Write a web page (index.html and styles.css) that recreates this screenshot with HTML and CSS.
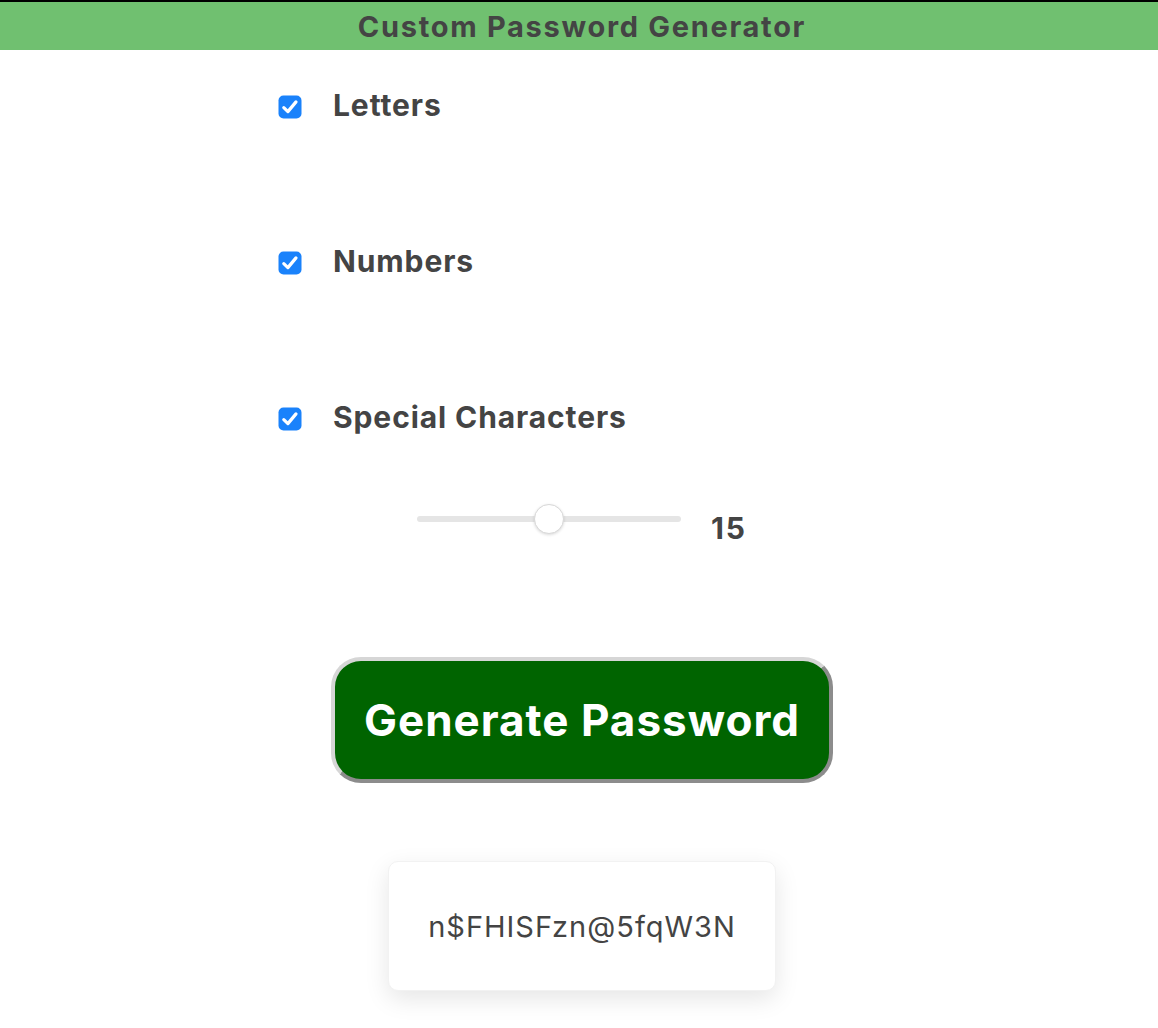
FILE: index.html
```html
<!DOCTYPE html>
<html>
<head>
<meta charset="utf-8">
<link rel="stylesheet" href="styles.css">
</head>
<body>
<header class="topbar"><h1 class="title">Custom Password Generator</h1></header>
<main class="app">
  <div class="options">
    <label class="option">
      <span class="check"><svg viewBox="0 0 24 24" width="24" height="24"><rect x="0.5" y="0.5" width="23" height="23" rx="5" fill="#1a82fb"/><path d="M5.8 12.6 L9.9 16.6 L18 6.9" fill="none" stroke="#fff" stroke-width="3.2" stroke-linecap="round" stroke-linejoin="round"/></svg></span>
      <span class="label">Letters</span>
    </label>
    <label class="option">
      <span class="check"><svg viewBox="0 0 24 24" width="24" height="24"><rect x="0.5" y="0.5" width="23" height="23" rx="5" fill="#1a82fb"/><path d="M5.8 12.6 L9.9 16.6 L18 6.9" fill="none" stroke="#fff" stroke-width="3.2" stroke-linecap="round" stroke-linejoin="round"/></svg></span>
      <span class="label">Numbers</span>
    </label>
    <label class="option">
      <span class="check"><svg viewBox="0 0 24 24" width="24" height="24"><rect x="0.5" y="0.5" width="23" height="23" rx="5" fill="#1a82fb"/><path d="M5.8 12.6 L9.9 16.6 L18 6.9" fill="none" stroke="#fff" stroke-width="3.2" stroke-linecap="round" stroke-linejoin="round"/></svg></span>
      <span class="label">Special Characters</span>
    </label>
  </div>
  <div class="length">
    <div class="slider">
      <div class="track"></div>
      <div class="thumb" style="left: 50%"></div>
    </div>
    <span class="value">15</span>
  </div>
  <button class="generate">Generate Password</button>
  <div class="result">n$FHISFzn@5fqW3N</div>
</main>
</body>
</html>
```
FILE: styles.css
```css
html, body {
  margin: 0;
  padding: 0;
  background: #fff;
}
body {
  font-family: Inter, "Noto Sans", sans-serif;
  color: #444;
}
.topbar {
  border-top: 2px solid #000;
  background: #70c070;
  height: 48px;
  display: flex;
  align-items: center;
  justify-content: center;
}
.title {
  margin: 0 0 0 6px;
  font-size: 29px;
  font-weight: 700;
  color: #444;
  letter-spacing: 1.7px;
}
.app {
  display: flex;
  flex-direction: column;
  align-items: center;
  padding-left: 6px;
  padding-bottom: 40px;
}
.options {
  align-self: flex-start;
  margin-left: 272px;
  margin-top: 40px;
  display: flex;
  flex-direction: column;
  gap: 122px;
}
.option {
  display: flex;
  align-items: center;
  height: 34px;
}
.check {
  width: 24px;
  height: 24px;
  display: block;
  margin-right: 31px;
}
.check svg {
  display: block;
}
.label {
  font-size: 30px;
  font-weight: 700;
  color: #444;
  letter-spacing: 0.9px;
  position: relative;
  top: -2px;
}
.length {
  margin-top: 65px;
  display: flex;
  align-items: center;
  gap: 30px;
}
.slider {
  position: relative;
  width: 264px;
  height: 32px;
}
.track {
  position: absolute;
  left: 0;
  right: 0;
  top: 13px;
  height: 6px;
  border-radius: 3px;
  background: #e5e5e5;
}
.thumb {
  position: absolute;
  top: 1px;
  width: 30px;
  height: 30px;
  margin-left: -15px;
  border-radius: 50%;
  background: #fff;
  box-sizing: border-box;
  border: 1px solid #d8d8d8;
  box-shadow: 0 1px 3px rgba(0,0,0,0.15);
}
.value {
  font-size: 30px;
  font-weight: 700;
  color: #444;
  letter-spacing: 2px;
  position: relative;
  top: 9px;
}
.generate {
  margin-top: 120px;
  width: 502px;
  height: 126px;
  box-sizing: border-box;
  border-radius: 30px;
  border: 4px solid;
  border-color: #d6d6d6 #8c8c8c #8c8c8c #d6d6d6;
  background: #006400;
  color: #fff;
  font-family: Inter, "Noto Sans", sans-serif;
  font-size: 44px;
  font-weight: 700;
  letter-spacing: 1px;
  padding: 0;
  cursor: pointer;
}
.result {
  margin-top: 78px;
  width: 388px;
  height: 130px;
  box-sizing: border-box;
  border-radius: 10px;
  background: #fff;
  box-shadow: 0 8px 24px rgba(0,0,0,0.1);
  border: 1px solid #f2f2f2;
  display: flex;
  align-items: center;
  justify-content: center;
  font-size: 29px;
  letter-spacing: 1px;
  color: #444;
}
```
